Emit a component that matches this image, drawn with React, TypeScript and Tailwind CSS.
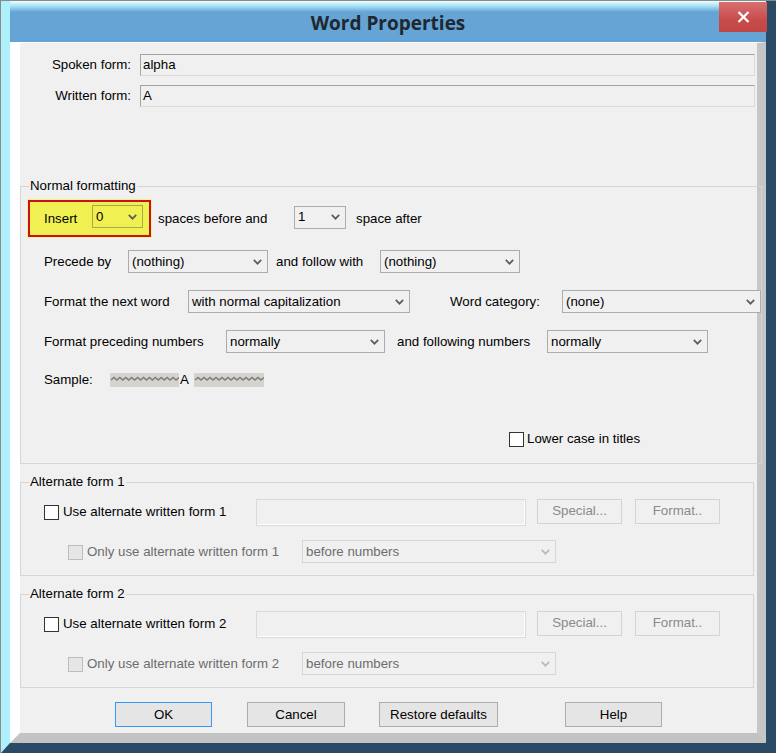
import { ReactNode } from 'react';

const txt = 'text-[13.3px] leading-[16px]';

function Chevron({ color }: { color: string }) {
  return (
    <svg width="9" height="6" viewBox="0 0 9 6" className="shrink-0">
      <path d="M0.8 0.8 L4.5 4.7 L8.2 0.8" fill="none" stroke={color} strokeWidth="1.7" />
    </svg>
  );
}

function Combo({ className, value, variant = 'normal' }: { className: string; value: string; variant?: 'normal' | 'yellow' | 'disabled' }) {
  const look =
    variant === 'yellow'
      ? 'border-[#a9a94c] bg-[#f0f052] text-black'
      : variant === 'disabled'
        ? 'border-[#d6d6d6] bg-[#f0f0f0] text-[#6d6d6d]'
        : 'border-[#acacac] bg-[#f0f0f0] text-black';
  return (
    <div className={`flex h-[23px] shrink-0 items-center justify-between border pl-[3px] pr-[5px] ${txt} ${look} ${className}`}>
      <span>{value}</span>
      <Chevron color={variant === 'disabled' ? '#b8b8b8' : '#5c5c5c'} />
    </div>
  );
}

function Check({ disabled }: { disabled?: boolean }) {
  return (
    <span
      className={`block h-[15px] w-[15px] shrink-0 border ${disabled ? 'border-[#bcbcbc] bg-[#e6e6e6]' : 'border-[#333333] bg-white'}`}
    />
  );
}

function Button({ className, children, variant = 'normal' }: { className: string; children: ReactNode; variant?: 'normal' | 'focus' | 'disabled' }) {
  const look =
    variant === 'disabled'
      ? 'border-[#d4d4d4] bg-[#f0f0f0] text-[#8a8a8a]'
      : variant === 'focus'
        ? 'border-[#3399ff] bg-[#e5e5e5] text-black'
        : 'border-[#adadad] bg-[#e5e5e5] text-black';
  return (
    <div className={`flex h-[25px] shrink-0 items-center justify-center border ${txt} ${look} ${className}`}>{children}</div>
  );
}

// the grey squiggle used for the sample preview
function Wave({ className }: { className: string }) {
  const pts: string[] = [];
  for (let i = 0; i <= 23; i++) pts.push(`${1 + i * 3},${i % 2 ? 4.5 : 7}`);
  return (
    <div className={`h-[14px] shrink-0 bg-[#d6d3ce] ${className}`}>
      <svg width="100%" height="14" viewBox="0 0 70 14" preserveAspectRatio="none">
        <polyline points={pts.join(' ')} fill="none" stroke="#7c7c7c" strokeWidth="1.6" />
      </svg>
    </div>
  );
}

function Group({ title, className, children }: { title: string; className: string; children: ReactNode }) {
  return (
    <fieldset className={`w-[734px] border border-[#d5d5d5] ${className}`}>
      <legend className={`ml-[8px] px-[1px] ${txt}`}>{title}</legend>
      {children}
    </fieldset>
  );
}

function AlternateForm({ n, className }: { n: number; className: string }) {
  return (
    <Group title={`Alternate form ${n}`} className={className}>
      <div className="pb-[12px]">
        <div className="mt-[8px] flex h-[28px] items-center">
          <div className="ml-[23px]">
            <Check />
          </div>
          <span className={`ml-[4px] w-[193px] ${txt}`}>Use alternate written form {n}</span>
          <div className="h-[27px] w-[270px] shrink-0 border border-[#dadada] bg-[#f0f0f0] shadow-[inset_-1px_-1px_0_#ffffff]" />
          <Button className="ml-[11px] w-[85px] -mt-[2px]" variant="disabled">
            Special...
          </Button>
          <Button className="ml-[13px] w-[85px] -mt-[2px]" variant="disabled">
            Format..
          </Button>
        </div>
        <div className="mt-[14px] flex h-[23px] items-center">
          <div className="ml-[47px] mt-[2px]">
            <Check disabled />
          </div>
          <span className={`ml-[4px] w-[215px] text-[#6d6d6d] ${txt}`}>Only use alternate written form {n}</span>
          <Combo className="w-[254px]" value="before numbers" variant="disabled" />
        </div>
      </div>
    </Group>
  );
}

export default function App() {
  return (
    <div className="h-[753px] w-[776px] overflow-hidden bg-[#8a8a8a] font-['Liberation_Sans',Arial,sans-serif] text-black">
      <div className="relative ml-[1px] mt-[1px] flex h-[752px] w-[775px] flex-col border-b-[10px] border-l-[9px] border-r-[10px] border-b-[#2b4a66] border-l-[#aef0fc] border-r-[#2b4a66] bg-[linear-gradient(180deg,#eaffff_0px,#a8e2f8_5px,#65a4d4_11px,#5f9ecf_100%)]">
        {/* title bar */}
        <div className="flex h-[41px] shrink-0 items-center justify-center pt-[3px]">
          <span className="font-['Open_Sans',sans-serif] text-[19px] font-bold text-[#1f2730]">Word Properties</span>
        </div>
        <div className="absolute left-[709px] top-[1px] flex h-[30px] w-[48px] items-center justify-center bg-[linear-gradient(180deg,#d97070,#c74c4c_60%,#c04545)]">
          <svg width="13" height="12" viewBox="0 0 13 12">
            <path d="M1.5 1 L11.5 11 M11.5 1 L1.5 11" stroke="#ffffff" strokeWidth="2.2" />
          </svg>
        </div>

        {/* dialog body */}
        <div className="flex-1 border-b-[10px] border-l-[10px] border-r-[9px] border-t border-b-[#c3c3c3] border-l-white border-r-[#c6c6c6] border-t-white bg-[#f0f0f0] pt-[11px]">
          <div className="flex h-[22px] items-center">
            <span className={`w-[111px] text-right ${txt}`}>Spoken form:</span>
            <div className={`ml-[9px] mr-[2px] flex h-[22px] flex-1 items-center border border-[#a3a3a3] border-b-[#dadada] border-r-[#dadada] pl-[2px] ${txt}`}>
              alpha
            </div>
          </div>
          <div className="mt-[9px] flex h-[22px] items-center">
            <span className={`w-[111px] text-right ${txt}`}>Written form:</span>
            <div className={`ml-[9px] mr-[2px] flex h-[22px] flex-1 items-center border border-[#a3a3a3] border-b-[#dadada] border-r-[#dadada] pl-[2px] ${txt}`}>
              A
            </div>
          </div>

          <Group title="Normal formatting" className="mt-[71px]">
            <div className="pb-[16px]">
              <div className="mt-[6px] flex items-center">
                <div className="ml-[7px] flex h-[37px] w-[123px] shrink-0 items-center border-2 border-[#c8101e] bg-[#f0f052] pl-[14px] shadow-[0_0_0_1px_#f4f48a]">
                  <span className={`w-[48px] ${txt}`}>Insert</span>
                  <Combo className="-mt-[4px] w-[51px]" value="0" variant="yellow" />
                </div>
                <span className={`ml-[7px] w-[136px] ${txt}`}>spaces before and</span>
                <Combo className="-mt-[3px] w-[52px]" value="1" />
                <span className={`ml-[10px] ${txt}`}>space after</span>
              </div>

              <div className="mt-[13px] flex items-center">
                <span className={`ml-[23px] w-[84px] shrink-0 ${txt}`}>Precede by</span>
                <Combo className="w-[140px]" value="(nothing)" />
                <span className={`ml-[8px] w-[104px] shrink-0 ${txt}`}>and follow with</span>
                <Combo className="w-[140px]" value="(nothing)" />
              </div>

              <div className="mt-[17px] flex items-center">
                <span className={`ml-[23px] w-[144px] shrink-0 ${txt}`}>Format the next word</span>
                <Combo className="w-[222px]" value="with normal capitalization" />
                <span className={`ml-[40px] w-[112px] shrink-0 ${txt}`}>Word category:</span>
                <Combo className="w-[199px]" value="(none)" />
              </div>

              <div className="mt-[17px] flex items-center">
                <span className={`ml-[23px] w-[182px] shrink-0 ${txt}`}>Format preceding numbers</span>
                <Combo className="w-[159px]" value="normally" />
                <span className={`ml-[12px] w-[150px] shrink-0 ${txt}`}>and following numbers</span>
                <Combo className="w-[161px]" value="normally" />
              </div>

              <div className="mt-[20px] flex h-[14px] items-center">
                <span className={`ml-[23px] w-[66px] shrink-0 ${txt}`}>Sample:</span>
                <Wave className="w-[69px]" />
                <span className={`ml-[1px] w-[14px] ${txt}`}>A</span>
                <Wave className="w-[70px]" />
              </div>

              <div className="mt-[44px] flex h-[16px] items-center">
                <div className="ml-[488px]">
                  <Check />
                </div>
                <span className={`ml-[3px] ${txt}`}>Lower case in titles</span>
              </div>
            </div>
          </Group>

          <AlternateForm n={1} className="mt-[10px]" />
          <AlternateForm n={2} className="mt-[10px]" />

          <div className="mt-[14px] flex items-center">
            <Button className="ml-[95px] w-[97px]" variant="focus">
              OK
            </Button>
            <Button className="ml-[35px] w-[98px]">Cancel</Button>
            <Button className="ml-[34px] w-[119px]">Restore defaults</Button>
            <Button className="ml-[67px] w-[97px]">Help</Button>
          </div>
        </div>
      </div>
    </div>
  );
}
